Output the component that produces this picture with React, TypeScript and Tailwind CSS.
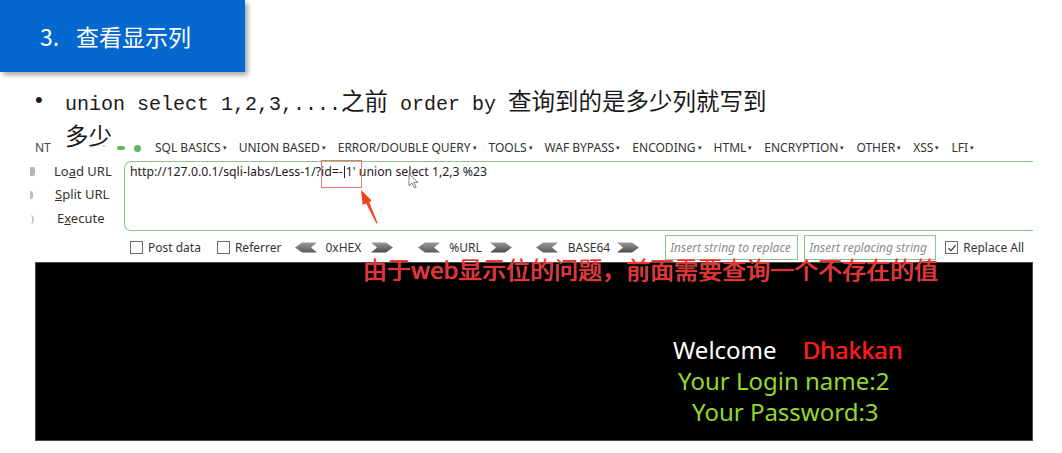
import React from "react";

const ui = "font-['Noto_Sans',sans-serif]";

function Box({ checked = false }: { checked?: boolean }) {
  return (
    <span className="flex h-[13px] w-[13px] items-center justify-center border border-[#6b6b6b] bg-white">
      {checked && (
        <svg width="10" height="10" viewBox="0 0 10 10">
          <path d="M1.5 5.2 L4 7.6 L8.6 2.2" fill="none" stroke="#333" strokeWidth="1.2" />
        </svg>
      )}
    </span>
  );
}

function LeftArrow() {
  return (
    <svg width="22" height="11" viewBox="0 0 22 11">
      <defs>
        <linearGradient id="ga" x1="0" y1="0" x2="0" y2="1">
          <stop offset="0" stopColor="#9a9a9a" />
          <stop offset="1" stopColor="#5a5a5a" />
        </linearGradient>
      </defs>
      <polygon points="0,5.5 7,0.5 22,0.5 16,5.5 22,10.5 7,10.5" fill="url(#ga)" />
    </svg>
  );
}

function RightArrow() {
  return (
    <svg width="22" height="11" viewBox="0 0 22 11">
      <defs>
        <linearGradient id="gb" x1="0" y1="0" x2="0" y2="1">
          <stop offset="0" stopColor="#9a9a9a" />
          <stop offset="1" stopColor="#4a4a4a" />
        </linearGradient>
      </defs>
      <polygon points="22,5.5 15,0.5 0,0.5 6,5.5 0,10.5 15,10.5" fill="url(#gb)" />
    </svg>
  );
}

function Menu({ label }: { label: string }) {
  return (
    <span className="flex items-center whitespace-nowrap">
      {label}
      <span className="ml-[2px] mt-[-1px] text-[7px] leading-none">▾</span>
    </span>
  );
}

export default function App() {
  const cjk = "font-['Noto_Sans_CJK_SC',sans-serif] text-[23.5px]";
  return (
    <div className="relative h-[453px] w-[1062px] overflow-hidden bg-white">
      {/* slide header */}
      <div className="flex h-[72px] w-[245px] items-center bg-[#0468cf] pl-[40px] font-['Noto_Sans_CJK_SC',sans-serif] text-[23px] text-white shadow-[3px_3px_5px_rgba(0,0,0,0.35)]">
        <span className="w-[36px]">3.</span>
        <span>查看显示列</span>
      </div>

      {/* bullet */}
      <div className="relative z-10 mt-[13px] flex h-[55px] text-[#1a1a1a]">
        <div className="w-[65px] pl-[35px] font-['Liberation_Sans',sans-serif] text-[22px] leading-[30px]">•</div>
        <div className="font-['Liberation_Mono',monospace] text-[20px] leading-[30px]">
          <div className="whitespace-nowrap">
            union select 1,2,3,....<span className={cjk}>之前</span> order by <span className={cjk}>查询到的是多少列就写到</span>
          </div>
          <div className={cjk + " leading-[30px]"}>多少</div>
        </div>
      </div>

      {/* browser screenshot */}
      <div className={"ml-[30px] w-[1003px] text-[#333] " + ui}>
        {/* toolbar row */}
        <div className="flex h-[16px] items-center text-[12px]">
          <span className="ml-[5px] w-[65px] text-[#444]">NT</span>
          <span className="mt-[-8px] w-[17px] text-[9px] text-[#bbb]">⌄</span>
          <span className="h-[4px] w-[8px] rounded-[2px] bg-[#5cb85c]" />
          <span className="ml-[9px] h-[7px] w-[7px] rounded-full bg-[#5cb85c]" />
          <div className="ml-[14px] flex gap-[12px]">
            <Menu label="SQL BASICS" />
            <Menu label="UNION BASED" />
            <Menu label="ERROR/DOUBLE QUERY" />
            <Menu label="TOOLS" />
            <Menu label="WAF BYPASS" />
            <Menu label="ENCODING" />
            <Menu label="HTML" />
            <Menu label="ENCRYPTION" />
            <Menu label="OTHER" />
            <Menu label="XSS" />
            <Menu label="LFI" />
          </div>
        </div>

        {/* url row */}
        <div className="mt-[5px] flex h-[70px]">
          <div className="flex w-[94px] flex-col text-[13px]">
            <div className="flex h-[22px] items-center">
              <span className="h-[9px] w-[5px] rounded-r-[2px] bg-[#b5b5b5]" />
              <span className="ml-[19px]">Lo<span className="underline">a</span>d URL</span>
            </div>
            <div className="flex h-[25px] items-center">
              <span className="h-[8px] w-[3px] rounded-r-[2px] bg-[#c0c0c0]" />
              <span className="ml-[22px]"><span className="underline">S</span>plit URL</span>
            </div>
            <div className="flex h-[24px] items-center">
              <span className="h-[9px] w-[4px] rounded-r-full border-r-2 border-[#c8c8c8]" />
              <span className="ml-[23px]">E<span className="underline">x</span>ecute</span>
            </div>
          </div>
          <div className="flex-1 rounded-l-[7px] border border-r-0 border-[#8cc48c] pl-[5px] pt-[1px] text-[12.3px] leading-[18px] text-[#222]">
            <span className="whitespace-nowrap">
              http://127.0.0.1/sqli-labs/Less-1/?id=-<span className="mx-[1px] inline-block h-[12px] w-[1px] translate-y-[2px] bg-[#222]" />1' union select 1,2,3 %23
            </span>
          </div>
        </div>

        {/* row 2 */}
        <div className="mt-[4px] flex h-[25px] items-center text-[12px]">
          <span className="ml-[100px]"><Box /></span>
          <span className="ml-[5px]">Post data</span>
          <span className="ml-[16px]"><Box /></span>
          <span className="ml-[5px]">Referrer</span>
          <span className="ml-[14px]"><LeftArrow /></span>
          <span className="ml-[8px]">0xHEX</span>
          <span className="ml-[10px]"><RightArrow /></span>
          <span className="ml-[25px]"><LeftArrow /></span>
          <span className="ml-[9px]">%URL</span>
          <span className="ml-[8px]"><RightArrow /></span>
          <span className="ml-[24px]"><LeftArrow /></span>
          <span className="ml-[10px]">BASE64</span>
          <span className="ml-[7px]"><RightArrow /></span>
          <div className="ml-[26px] flex h-[25px] w-[133px] items-center overflow-hidden whitespace-nowrap border border-[#8cc48c] pl-[4px] italic text-[#8a8a8a]">
            Insert string to replace
          </div>
          <div className="ml-[6px] flex h-[25px] w-[132px] items-center overflow-hidden whitespace-nowrap border border-[#8cc48c] pl-[4px] italic text-[#8a8a8a]">
            Insert replacing string
          </div>
          <span className="ml-[9px]"><Box checked /></span>
          <span className="ml-[5px]">Replace All</span>
        </div>

        {/* result panel */}
        <div className="ml-[5px] mt-[2px] h-[179px] w-[998px] border border-[#4a4a4a] bg-black pt-[71px] text-[24px] leading-[31px]">
          <div className="ml-[637px] flex whitespace-nowrap">
            <span className="text-white">Welcome</span>
            <span className="ml-[26px] text-[#ff1a1a] [text-shadow:0.4px_0_0_#ff1a1a]">Dhakkan</span>
          </div>
          <div className="ml-[642px] whitespace-nowrap text-[#92d92e]">Your Login name:2</div>
          <div className="ml-[656px] whitespace-nowrap text-[#92d92e]">Your Password:3</div>
        </div>
      </div>

      {/* overlays: annotation box, arrow, cursor, note */}
      <div className="absolute left-[321px] top-[160px] h-[28px] w-[41px] border-[1.5px] border-[#e8776d]" />
      <svg className="absolute left-[355px] top-[188px]" width="30" height="40" viewBox="0 0 30 40">
        <polygon points="6,2 16.6,12.4 14.2,14.2 22.6,35 21.4,35.4 11.2,15.6 7.6,16.8" fill="#f0401f" />
      </svg>
      <svg className="absolute left-[408px] top-[173px]" width="12" height="16" viewBox="0 0 12 16">
        <path d="M1 1 L1 13 L4 10 L6.5 15 L8.2 14.2 L5.8 9.4 L10 9.4 Z" fill="#fff" stroke="#777" strokeWidth="0.9" />
      </svg>
      <div className="absolute left-[363px] top-[257px] whitespace-nowrap font-['Noto_Sans_CJK_SC',sans-serif] text-[24px] leading-none text-[#f02a2a] [text-shadow:0_0_1px_#ff9a9a]">
        由于web显示位的问题，前面需要查询一个不存在的值
      </div>
    </div>
  );
}
